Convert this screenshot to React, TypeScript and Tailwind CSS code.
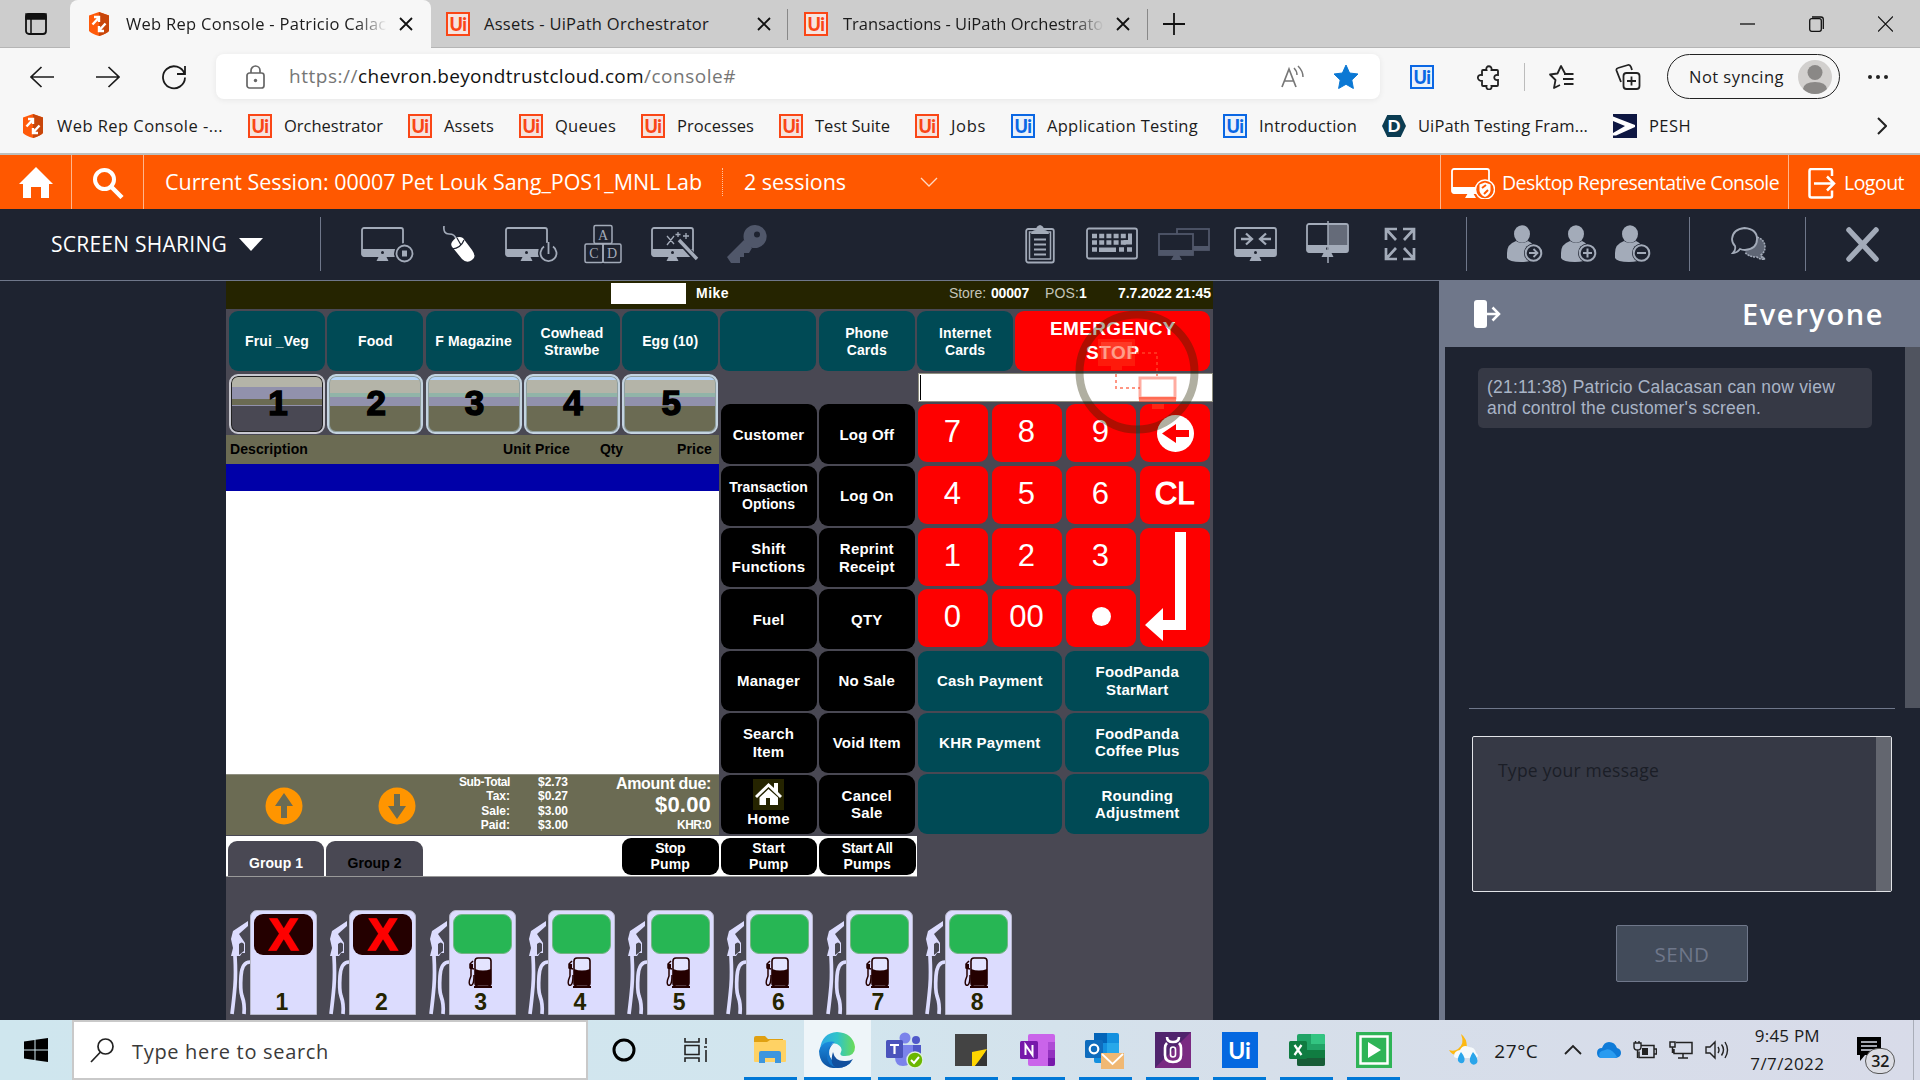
import { useLayoutEffect, useRef, useState } from "react";
import type { ReactNode } from "react";

/* One-line label whose letter spacing is adjusted to fill a given width. */
function Fit({ w, children, className = "" }: { w: number; children: string; className?: string }) {
  const ref = useRef<HTMLSpanElement>(null);
  const [ls, setLs] = useState(0);
  useLayoutEffect(() => {
    if (ref.current) {
      const natural = ref.current.getBoundingClientRect().width;
      setLs((w - natural) / children.length);
    }
  }, [w, children]);
  return (
    <span ref={ref} className={"inline-block shrink-0 whitespace-pre " + className} style={{ letterSpacing: ls }}>
      {children}
    </span>
  );
}

function Svg({ w, h, className = "", children }: { w: number; h: number; className?: string; children: ReactNode }) {
  return (
    <svg width={w} height={h} viewBox={`0 0 ${w} ${h}`} fill="none" className={"shrink-0 " + className}>
      {children}
    </svg>
  );
}

function Shield() {
  return (
    <Svg w={24} h={24}>
      <path d="M12 0 22 3.500V19q-3 3-10 5Q5 22 2 19V3.500Z" fill="#ff5a0a" />
      <path d="M12 0 22 3.500V19q-3 3-10 5Z" fill="#c8460a" />
      <path d="M5.500 12.500 11 6.500M7 5h5v5M18.500 11.500l-5.500 6M17 19h-5v-5" stroke="#fff" strokeWidth="2.400" />
    </Svg>
  );
}

function UiIcon({ blue = false }: { blue?: boolean }) {
  return (
    <span
      className={
        "flex h-6 w-6 shrink-0 items-center justify-center border-2 font-['Lato'] text-[18px] font-black leading-none tracking-[-0.5px] " +
        (blue ? "border-[#0a67e4] bg-[#e9f1fb] text-[#0a67e4]" : "border-[#fa4616] bg-[#f6e4df] text-[#fa4616]")
      }
    >
      Ui
    </span>
  );
}

function CloseX() {
  return (
    <Svg w={14} h={16}>
      <path d="M1 2 13 14M13 2 1 14" stroke="#111" strokeWidth="1.800" />
    </Svg>
  );
}

function TabStrip() {
  return (
    <div className="flex h-12 items-stretch border-b border-[#b5b5b5] bg-[#cdcdcd] text-[16.5px] text-[#1b1b1b]">
      <div className="flex w-[70px] items-center pl-[25px]">
        <Svg w={22} h={24}>
          <rect x="1" y="2" width="20" height="20" rx="3" stroke="#111" strokeWidth="1.800" />
          <path d="M1 2h20v5H1zM6 7v15" fill="#111" stroke="#111" strokeWidth="1.500" />
        </Svg>
      </div>
      <div className="-mb-px flex w-[361px] items-center rounded-t-lg bg-[#f7f7f7] pl-[17px]">
        <Shield />
        <div className="ml-[15px] w-[261px] overflow-hidden pt-px [mask-image:linear-gradient(to_right,#000_88%,transparent)]">
          <Fit w={270}>Web Rep Console - Patricio Calaca</Fit>
        </div>
        <span className="ml-[12px]"><CloseX /></span>
      </div>
      <div className="flex w-[357px] items-center border-r border-[#888] pl-[15px] [border-image:linear-gradient(to_bottom,transparent_20%,#888_20%,#888_84%,transparent_84%)_1]">
        <UiIcon />
        <Fit w={225} className="ml-[14px] pt-px">Assets - UiPath Orchestrator</Fit>
        <span className="ml-[48px]"><CloseX /></span>
      </div>
      <div className="flex w-[360px] items-center border-r border-[#888] pl-4 [border-image:linear-gradient(to_bottom,transparent_20%,#888_20%,#888_84%,transparent_84%)_1]">
        <UiIcon />
        <div className="ml-[15px] w-[261px] overflow-hidden pt-px [mask-image:linear-gradient(to_right,#000_88%,transparent)]">
          <Fit w={267}>Transactions - UiPath Orchestrator</Fit>
        </div>
        <span className="ml-[12px]"><CloseX /></span>
      </div>
      <div className="flex items-center pl-[15px]">
        <Svg w={22} h={22}>
          <path d="M0 11h22M11 0v22" stroke="#111" strokeWidth="1.800" />
        </Svg>
      </div>
      <div className="ml-auto flex items-center gap-[54px] pr-[27px]">
        <Svg w={15} h={16}><path d="M0 8h15" stroke="#111" strokeWidth="1.300" /></Svg>
        <Svg w={15} h={16}>
          <rect x=".7" y="2.700" width="11.600" height="12.600" rx="2" stroke="#111" strokeWidth="1.300" />
          <path d="M3 1h9q2.300 0 2.300 2.300V13" stroke="#111" strokeWidth="1.300" />
        </Svg>
        <Svg w={15} h={16}><path d="M0 .5 15 15.500M15 .5 0 15.500" stroke="#111" strokeWidth="1.200" /></Svg>
      </div>
    </div>
  );
}

function AddressBar() {
  return (
    <div className="flex h-[57px] items-center text-[#1b1b1b]">
      <Svg w={24} h={24} className="ml-[30px]"><path d="M24 12H1M11.500 2 1 12l10.500 10" stroke="#1b1b1b" strokeWidth="1.700" /></Svg>
      <Svg w={24} h={24} className="ml-[42px]"><path d="M0 12h23M12.500 2 23 12 12.500 22" stroke="#1b1b1b" strokeWidth="1.700" /></Svg>
      <Svg w={24} h={26} className="ml-[42px]">
        <path d="M22.500 10A11 11 0 1 0 23 13.500M23 2v8h-8" stroke="#1b1b1b" strokeWidth="1.800" />
      </Svg>
      <div className="ml-[30px] flex h-[45px] w-[1164px] items-center rounded-lg bg-white pl-[30px] shadow-[0_1px_6px_rgba(0,0,0,0.07)]">
        <Svg w={19} h={24}>
          <rect x="1" y="8" width="17" height="15" rx="2.500" stroke="#666" strokeWidth="1.700" />
          <path d="M5 8V5.500a4.500 4.500 0 0 1 9 0V8" stroke="#666" strokeWidth="1.700" />
          <circle cx="9.500" cy="15.500" r="1.700" fill="#666" />
        </Svg>
        <Fit w={69} className="ml-[24px] text-[19px] text-[#767676]">https://</Fit>
        <Fit w={286} className="text-[19px] text-[#111]">chevron.beyondtrustcloud.com</Fit>
        <Fit w={92} className="text-[19px] text-[#767676]">/console#</Fit>
        <Svg w={24} h={24} className="ml-[545px]">
          <path d="M1 22 8 4l7 18M3.500 16h9" stroke="#777" strokeWidth="1.700" />
          <path d="M13 3q3 3 3 7M17 1q5 5 5 11" stroke="#777" strokeWidth="1.500" />
        </Svg>
        <Svg w={26} h={25} className="ml-[28px]">
          <path d="m13 1 3.600 8 8.400 1-6.200 6 1.600 8.500L13 20.300 5.600 24.500 7.200 16 1 10l8.400-1Z" fill="#0b78d4" stroke="#0b78d4" strokeLinejoin="round" />
        </Svg>
      </div>
      <div className="ml-[30px]"><UiIcon blue /></div>
      <Svg w={24} h={26} className="ml-[43px]">
        <path d="M6 6h3.500C8 1 15.500 1 14.500 6H20q1 0 1 1v4c-5-1-5 6 0 5v5q0 1-1 1h-5.500c1 4.500-6 4.500-5 0H6q-1 0-1-1v-4C-.5 17-.5 10 5 11V7q0-1 1-1Z" stroke="#222" strokeWidth="1.800" />
      </Svg>
      <div className="ml-[23px] h-7 w-px bg-[#bcbcbc]" />
      <Svg w={25} h={26} className="ml-[24px]">
        <path d="M16 9.500 12 2 8.500 9.500 1 10.500l5.500 5.500L5 24l6-3" stroke="#222" strokeWidth="1.800" strokeLinejoin="round" />
        <path d="M15 10h9.500M14 15h10.500M15 20h9.500" stroke="#222" strokeWidth="1.800" />
      </Svg>
      <Svg w={26} h={26} className="ml-[41px]">
        <rect x="8.500" y="9" width="16" height="16" rx="3" stroke="#222" strokeWidth="1.800" />
        <path d="M16.500 12.500v9M12 17h9M6 18 1.500 6.500Q1 4.500 3 4L13 1q2-.5 3 2l1 3" stroke="#222" strokeWidth="1.800" />
      </Svg>
      <div className="ml-[26px] flex h-[45px] w-[173px] items-center rounded-full border-[1.5px] border-[#222] pl-[21px]">
        <Fit w={95} className="pt-px text-[16.5px]">Not syncing</Fit>
        <Svg w={34} h={34} className="ml-[14px]">
          <circle cx="17" cy="17" r="17" fill="#d2d0ce" />
          <circle cx="17" cy="12.500" r="7.500" fill="#8a8886" />
          <path d="M5 29q1-7 12-7t12 7q-5 5-12 5T5 29Z" fill="#8a8886" />
        </Svg>
      </div>
      <Svg w={22} h={6} className="ml-[27px]">
        <circle cx="3" cy="3" r="2" fill="#222" /><circle cx="11" cy="3" r="2" fill="#222" /><circle cx="19" cy="3" r="2" fill="#222" />
      </Svg>
    </div>
  );
}

const bookmarks: { icon: ReactNode; label: string; w: number }[] = [
  { icon: <Shield />, label: "Web Rep Console -...", w: 166 },
  { icon: <UiIcon />, label: "Orchestrator", w: 99 },
  { icon: <UiIcon />, label: "Assets", w: 50 },
  { icon: <UiIcon />, label: "Queues", w: 61 },
  { icon: <UiIcon />, label: "Processes", w: 77 },
  { icon: <UiIcon />, label: "Test Suite", w: 75 },
  { icon: <UiIcon />, label: "Jobs", w: 35 },
  { icon: <UiIcon blue />, label: "Application Testing", w: 151 },
  { icon: <UiIcon blue />, label: "Introduction", w: 98 },
  {
    icon: (
      <span className="flex h-[22px] w-6 items-center justify-center bg-[#0b3c52] font-['Lato'] text-[17px] font-black text-white [clip-path:polygon(22%_0,78%_0,100%_50%,78%_100%,22%_100%,0_50%)]">D</span>
    ),
    label: "UiPath Testing Fram...",
    w: 170,
  },
  {
    icon: (
      <Svg w={24} h={24}>
        <path d="M0 0h24v24H0z" fill="#0e1742" />
        <path d="M0 2.500 22 11v2L3 21.500H0V19l12-7L0 7Z" fill="#fff" />
      </Svg>
    ),
    label: "PESH",
    w: 42,
  },
];

function Bookmarks() {
  return (
    <div className="flex h-[48px] items-center gap-[25px] pb-[6px] pl-[21px] text-[16.5px] text-[#1b1b1b]">
      {bookmarks.map((b) => (
        <div key={b.label} className="flex shrink-0 items-center gap-3">
          {b.icon}
          <Fit w={b.w}>{b.label}</Fit>
        </div>
      ))}
      <Svg w={10} h={18} className="ml-auto mr-[33px]"><path d="M1 1l8 8-8 8" stroke="#222" strokeWidth="2" /></Svg>
    </div>
  );
}

function SessionBar() {
  return (
    <div className="flex h-[54px] items-stretch bg-[#ff5800] font-['Open_Sans'] text-white">
      <div className="flex w-[72px] items-center justify-center border-r border-[#ffb58c]">
        <Svg w={36} h={31}>
          <path d="M18 0 1 17h4v14h8V20h10v11h8V17h4Z" fill="#fff" />
        </Svg>
      </div>
      <div className="flex w-[72px] items-center border-r border-[#ffb58c] pl-[21px] pt-[3px]">
        <Svg w={31} h={31}>
          <circle cx="11.500" cy="11.500" r="9.500" stroke="#fff" strokeWidth="4" />
          <path d="M18 18.500 29 29.500" stroke="#fff" strokeWidth="4.500" />
        </Svg>
      </div>
      <div className="flex items-center pl-[21px]">
        <Fit w={537} className="pt-px text-[21.5px]">Current Session: 00007 Pet Louk Sang_POS1_MNL Lab</Fit>
        <div className="ml-[20px] h-[28px] border-l border-dotted border-[#ffc4a0]" />
        <Fit w={102} className="ml-[21px] pt-px text-[21.5px]">2 sessions</Fit>
        <Svg w={18} h={12} className="ml-[74px]"><path d="m1 2 8 8 8-8" stroke="#ffd9c4" strokeWidth="1.300" /></Svg>
      </div>
      <div className="ml-auto flex w-[348px] items-center border-l border-[#ffb58c] pl-[10px] pt-[3px]">
        <Svg w={44} h={31}>
          <rect x="1" y="1" width="37" height="24" rx="2" stroke="#fff" strokeWidth="1.800" />
          <path d="M1 19h27v6H1zM17 25l-3 5h11l-3-5Z" fill="#fff" />
          <circle cx="34" cy="21.500" r="9.500" fill="#ff5800" stroke="#fff" strokeWidth="1.500" />
          <path d="m34 14.500 5.500 2V23q-1 4-5.500 6-4.500-2-5.500-6v-6.500Z" fill="#fff" />
          <path d="m31 20 4-3M33 26l4-4" stroke="#ff5800" strokeWidth="2" />
        </Svg>
        <Fit w={277} className="ml-[7px] pb-px text-[19.5px]">Desktop Representative Console</Fit>
      </div>
      <div className="flex w-[132px] items-center border-l border-[#ffb58c] pl-[19px] pt-[3px]">
        <Svg w={28} h={31}>
          <path d="M24 8V2.500q0-1.500-1.500-1.500H3.500Q1.500 1 1.500 3v24.500q0 2 2 2h19q1.500 0 1.500-1.500v-5.500" stroke="#fff" strokeWidth="2.500" />
          <path d="M6 15.500h20M19 8.500l7 7-7 7" stroke="#fff" strokeWidth="2.500" />
        </Svg>
        <Fit w={60} className="ml-[8px] pb-px text-[19.5px]">Logout</Fit>
      </div>
    </div>
  );
}

const G = "#a3abb9";

function Monitor({ children }: { children?: ReactNode }) {
  return (
    <>
      <rect x="1" y="3" width="41" height="28" rx="2" stroke={G} strokeWidth="1.800" />
      <path d="M1 24h41v7H1zM18 31l-2.500 5h12L25 31Z" fill={G} />
      <circle cx="21.500" cy="27.500" r="1.500" fill="#1e2330" />
      {children}
    </>
  );
}

function Person({ children }: { children: ReactNode }) {
  return (
    <Svg w={36} h={38}>
      <ellipse cx="15" cy="9" rx="8" ry="8.800" fill={G} />
      <path d="M9 16Q0 19 0 28v5q2 4 14 4 10 0 14-4V26q-1-8-7-10-6 4-12 0Z" fill={G} />
      <circle cx="26.500" cy="28" r="9.500" fill="#1e2330" />
      <circle cx="26.500" cy="28" r="7.800" stroke={G} strokeWidth="2" />
      {children}
    </Svg>
  );
}

function Divider({ className = "" }: { className?: string }) {
  return <div className={"h-[54px] w-px shrink-0 bg-[#6f778a] " + className} />;
}

function ToolBar() {
  return (
    <div className="flex h-[72px] items-center border-b border-[#6f778a] bg-[#1e2330] pb-px font-['Open_Sans'] text-white">
      <Fit w={176} className="ml-[51px] pt-px text-[21px]">SCREEN SHARING</Fit>
      <Svg w={24} h={13} className="ml-[12px] mt-px"><path d="M0 0h24L12 13Z" fill="#fff" /></Svg>
      <Divider className="ml-[57px]" />
      <Svg w={54} h={38} className="ml-[40px]">
        <Monitor>
          <circle cx="43.500" cy="28.500" r="10.500" fill="#1e2330" /><circle cx="43.500" cy="28.500" r="8" stroke={G} strokeWidth="1.800" />
          <path d="M41 25.500h5v6h-5z" fill={G} />
        </Monitor>
      </Svg>
      <Svg w={34} h={40} className="ml-[28px]">
        <path d="M1 2q-1 8 5 8t7 5" stroke={G} strokeWidth="1.700" />
        <path d="M9 18q5-7 11-4l9 12q5 7 0 10-5 4-10-1l-9-11q-3-3-1-6Z" fill="#fff" />
        <path d="M9 25q9-1 12-9M14 14l4 7" stroke="#1e2330" strokeWidth="1.200" />
      </Svg>
      <Svg w={54} h={38} className="ml-[28px]">
        <Monitor>
          <circle cx="43.500" cy="28" r="10.500" fill="#1e2330" />
          <path d="M39 21.500a8 8 0 1 0 9 0M43.500 17v12" stroke={G} strokeWidth="1.800" />
        </Monitor>
      </Svg>
      <Svg w={38} h={40} className="ml-[25px]">
        <rect x="10" y="1.500" width="18" height="18" rx="1.500" stroke={G} strokeWidth="1.500" />
        <rect x="1" y="20" width="18" height="18.500" rx="1.500" stroke={G} strokeWidth="1.500" />
        <rect x="19" y="20" width="18" height="18.500" rx="1.500" stroke={G} strokeWidth="1.500" />
        <g fill={G} fontFamily="Liberation Serif" fontSize="14" textAnchor="middle">
          <text x="19" y="15.500">A</text><text x="10" y="34">C</text><text x="28" y="34">D</text>
        </g>
      </Svg>
      <Svg w={48} h={38} className="ml-[29px]">
        <Monitor>
          <path d="m27 14 19 21" stroke="#1e2330" strokeWidth="6" />
          <path d="m28 15 18 19" stroke={G} strokeWidth="3.500" />
          <path d="m16 11 7 8M23 11l-7 9M27 7v5M24.500 9.500h5M35 8v6M32 11h6" stroke={G} strokeWidth="1.300" />
        </Monitor>
      </Svg>
      <Svg w={40} h={40} className="ml-[28px]">
        <path d="M28 1a11.500 11.500 0 1 0 0 23q2 0 3.500-.5A11.500 11.500 0 0 0 28 1Zm2 6.500a3 3 0 1 1 0 6 3 3 0 0 1 0-6Z" fill="#50576a" fillRule="evenodd" />
        <path d="m17 16 8 8-3 5h-5v4h-4v6H4l-4-6Z" fill="#50576a" />
      </Svg>
      <Svg w={30} h={40} className="ml-[258px]">
        <rect x="1.200" y="5" width="27.600" height="33.500" rx="2" stroke={G} strokeWidth="1.800" />
        <rect x="4.500" y="8" width="21" height="27" stroke={G} strokeWidth="1.500" />
        <path d="M6 10q1-4 5-4 0-4 4-5 4 1 4 5 4 0 5 4Z" fill={G} />
        <path d="M9 15.500h12M9 20.500h12M9 25.500h12M9 30.500h12" stroke={G} strokeWidth="1.800" />
      </Svg>
      <Svg w={52} h={34} className="ml-[31px]">
        <rect x="1" y="1.500" width="50" height="30" rx="2" stroke={G} strokeWidth="1.800" />
        <path d="M6 9h35M6 15.500h35" stroke={G} strokeWidth="4.500" strokeDasharray="5 2.200" />
        <path d="M6 22.500h5M33 22.500h5M41 22.500h5" stroke={G} strokeWidth="4.500" />
        <path d="M13 20.500h17v4.500H13zM42 6.500h4v11h-8.500v-4.500H42z" fill={G} />
      </Svg>
      <Svg w={52} h={36} className="ml-[20px]">
        <rect x="19" y="3" width="32" height="21" stroke="#50576a" strokeWidth="1.800" />
        <path d="M35 20h16v4H35z" fill="#50576a" />
        <rect x="1" y="8" width="34" height="21" fill="#1e2330" stroke="#50576a" strokeWidth="1.800" />
        <path d="M1 24h34v5H1zM16 29l-3 5h11l-3-5Z" fill="#50576a" />
      </Svg>
      <Svg w={44} h={38} className="ml-[24px]">
        <Monitor><path d="M7 14h10M12 8.500l6 5.500-6 5.500M37 14H27M32 8.500 26 14l6 5.500" stroke={G} strokeWidth="2.300" /></Monitor>
      </Svg>
      <Svg w={46} h={42} className="mb-[4px] ml-[28px]">
        <Monitor><path d="M22 4h19v20H22z" fill="#656b79" /><path d="M22 0v42" stroke={G} strokeWidth="1.500" /></Monitor>
      </Svg>
      <Svg w={32} h={34} className="ml-[32px]">
        <path d="M2 13V2h11M2 2l10 11M19 2h11v11M30 2 20 13M2 21v11h11M2 32l10-11M19 32h11V21M30 32 20 21" stroke={G} strokeWidth="2.700" />
      </Svg>
      <Divider className="ml-[50px]" />
      <div className="ml-[40px] flex gap-[18px]">
        <Person><path d="M22 28h8M26.500 24l4 4-4 4" stroke={G} strokeWidth="1.800" /></Person>
        <Person><path d="M22 28h9M26.500 23.500v9" stroke={G} strokeWidth="2" /></Person>
        <Person><path d="M22 28h9" stroke={G} strokeWidth="2" /></Person>
      </div>
      <Divider className="ml-[38px]" />
      <Svg w={36} h={34} className="ml-[41px]">
        <path d="M20 22q10 2 10 6 4 2 4 4-5 1-8-2-8 0-11-4Z" fill="#8a92a1" />
        <path d="M26 10q8 3 8 10 0 5-4 8 0 3 4 4-5 1-8-2-9 0-12-5" stroke={G} strokeWidth="1.600" strokeDasharray="2 1" fill="#5f6675" />
        <path d="M13.500 1Q26 2 26 12T14 23q-3 0-5-1-3 4-7 4 3-3 2-7-3-3-3-7Q2 2 13.500 1Z" fill="#1e2330" stroke={G} strokeWidth="1.800" />
      </Svg>
      <Divider className="ml-[38px]" />
      <Svg w={33} h={35} className="ml-[40px]"><path d="M3 3l27 29M30 3 3 32" stroke={G} strokeWidth="5.500" strokeLinecap="round" /></Svg>
    </div>
  );
}

function TealKey({ lines, className = "" }: { lines: string[]; className?: string }) {
  return (
    <div className={"flex flex-col items-center justify-center rounded-[9px] bg-[#004a55] text-center font-bold text-white " + className}>
      {lines.map((l) => <span key={l}>{l}</span>)}
    </div>
  );
}

const categories = [["Frui _Veg"], ["Food"], ["F Magazine"], ["Cowhead", "Strawbe"], ["Egg (10)"], [], ["Phone", "Cards"], ["Internet", "Cards"]];

const functions = [
  ["Customer"], ["Log Off"], ["Transaction", "Options"], ["Log On"], ["Shift", "Functions"], ["Reprint", "Receipt"],
  ["Fuel"], ["QTY"], ["Manager"], ["No Sale"], ["Search", "Item"], ["Void Item"], ["Home"], ["Cancel", "Sale"],
];

const payments = [["Cash Payment"], ["FoodPanda", "StarMart"], ["KHR Payment"], ["FoodPanda", "Coffee Plus"], [], ["Rounding", "Adjustment"]];

function FunctionKey({ lines }: { lines: string[] }) {
  const home = lines[0] === "Home";
  const size = lines[0] === "Transaction" ? "text-[14px] leading-[16.5px] tracking-[0px]" : "text-[15px] leading-[17.3px] tracking-[0.2px]";
  return (
    <div className={"flex h-[59.7px] flex-col items-center justify-center rounded-[9px] bg-black font-bold text-white " + size}>
      {home && (
        <Svg w={31} h={31} className="-mt-[3px] bg-[#252400]">
          <path d="M15.500 4 2 17l2 2 11.500-11L27 19l2-2-4-4V4h-4v5Z" fill="#fff" />
          <path d="m15.500 10-9 8.500V26H13v-7h4v7h8v-7.500Z" fill="#fff" />
        </Svg>
      )}
      {lines.map((l) => <span key={l}>{l}</span>)}
    </div>
  );
}

function NumKey({ children, className = "" }: { children: ReactNode; className?: string }) {
  return <div className={"flex items-center justify-center rounded-[9px] bg-[#fe0000] text-[31px] leading-none text-white " + className}>{children}</div>;
}

function ArrowDisc({ down = false }: { down?: boolean }) {
  return (
    <Svg w={38} h={38} className={down ? "rotate-180" : ""}>
      <circle cx="19" cy="19" r="18.500" fill="#ff9500" />
      <path d="M19 6 28 19h-6v12h-6V19h-6Z" fill="#6b6b53" />
    </Svg>
  );
}

function Pump({ n }: { n: number }) {
  const stopped = n < 3;
  return (
    <div className="flex h-[105px] w-[88px]">
      <Svg w={21} h={105}>
        <path d="m4 21 15-10v5L10 24l6 9v10h-3l-2 3H2l2-8-2-9Z" fill="#dcdcfe" />
        <path d="M10 34q3-3 5 0v7l-5 4Z" fill="#494853" />
        <path d="M6 46q1 18 0 30T3 104M21 52q-8 0-9 14t1 20q3 8 2 18" stroke="#dcdcfe" strokeWidth="3.700" />
      </Svg>
      <div className="flex h-[105px] w-[67px] flex-col items-center rounded-t-[7px] border border-[#b7b7c9] bg-[#dcdcfe] pt-[3px]">
        {stopped ? (
          <div className="flex h-[41px] w-[59px] items-center justify-center rounded-[9px] bg-[#240000] text-[44px] font-bold leading-none text-[#fe0000] [-webkit-text-stroke:1.5px_#fe0000]">X</div>
        ) : (
          <div className="h-[41px] w-[59px] rounded-[9px] border border-[#75b586] bg-[#27b654]" />
        )}
        <div className="mt-[3px] h-[34px] pr-[5px]">
          {!stopped && (
            <Svg w={24} h={32}>
              <rect x="7" y="1" width="16" height="28" rx="3" fill="#e4e4fe" stroke="#240000" strokeWidth="1.600" />
              <path d="M7 12q8 3 16 0v16H7zM6 29h18v2H6z" fill="#240000" />
              <path d="M5 4 2 7v4l4 1M3 12v7q-3 7-1 9 4 2 4-10" stroke="#240000" strokeWidth="1.500" />
              <path d="M2 7h3v5H2z" fill="#240000" />
            </Svg>
          )}
        </div>
        <div className="pr-[3px] text-[23px] font-bold leading-[24px] text-[#252400]">{n}</div>
      </div>
    </div>
  );
}

function Pos() {
  return (
    <div className="relative flex w-[987px] flex-col bg-[#494853] font-['Liberation_Sans']">
      <div className="flex h-[28px] shrink-0 items-center bg-[#252400] pb-[3px] text-[14px] text-[#c4c4b8]">
        <div className="ml-[385px] h-[21px] w-[75px] bg-white" />
        <Fit w={33} className="ml-[10px] font-bold text-white">Mike</Fit>
        <Fit w={37} className="ml-[220px]">Store:</Fit>
        <Fit w={38} className="ml-[5px] font-bold text-white">00007</Fit>
        <Fit w={34} className="ml-[16px]">POS:</Fit>
        <Fit w={8} className="font-bold text-white">1</Fit>
        <Fit w={93} className="ml-[31px] font-bold text-white">7.7.2022 21:45</Fit>
      </div>
      <div className="flex gap-[2.3px] pl-[3px] pt-[2px] text-[14px] leading-[16.4px] tracking-[0.1px]">
        {categories.map((c, i) => <TealKey key={i} lines={c} className="h-[60px] w-24 pt-px" />)}
        <div className="flex h-[60px] w-[195px] flex-col items-center rounded-[9px] bg-[#fe0000] pt-[6px] text-[19px] font-bold leading-[24px] text-white">
          <Fit w={126}>EMERGENCY</Fit>
          <Fit w={54}>STOP</Fit>
        </div>
      </div>
      <div className="flex h-[465px]">
        <div className="flex w-[493px] flex-col">
          <div className="flex gap-[2.3px] pb-px pl-[3px] pt-[3px]">
            <div className="flex h-[60px] w-24 items-center justify-center rounded-[9px] border-2 border-[#c8c8d0] bg-[linear-gradient(#b4b4a8_0_20%,#9191ac_20%_41%,#6b6b53_41%_51%,#9191ac_51%_53%,#494853_53%)] pb-px pl-[2px] text-[35px] font-bold text-black shadow-[inset_0_0_0_1px_#222] [-webkit-text-stroke:1.5px_#000]">1</div>
            {[2, 3, 4, 5].map((n) => (
              <div key={n} className="flex h-[60px] w-24 items-center justify-center rounded-[9px] border-2 border-[#c3d3e0] bg-[linear-gradient(#b4d4fa_0_7%,#b4b4a8_7%_31%,#91b4a8_31%_38%,#9191ac_38%_53%,#6b6b53_53%)] pb-px pl-[2px] text-[35px] font-bold text-black shadow-[inset_0_0_0_1px_#8f9f9f] [-webkit-text-stroke:1.5px_#000]">{n}</div>
            ))}
          </div>
          <div className="flex h-[29px] items-center bg-[#6b6b53] pl-[4px] text-[14px] font-bold text-black">
            <Fit w={78}>Description</Fit>
            <Fit w={67} className="ml-[195px]">Unit Price</Fit>
            <Fit w={23} className="ml-[30px]">Qty</Fit>
            <Fit w={35} className="ml-[54px]">Price</Fit>
          </div>
          <div className="h-[27px] bg-[#0000a8]" />
          <div className="h-[284px] border-b border-[#8f8f80] bg-white" />
          <div className="flex h-[60px] bg-[#6b6b53] text-white">
            <div className="flex items-center gap-[75px] pl-[39px] pt-px"><ArrowDisc /><ArrowDisc down /></div>
            <div className="ml-auto flex flex-col items-end text-[12px] font-bold leading-[14.4px]">
              <Fit w={51}>Sub-Total</Fit><span>Tax:</span><span>Sale:</span><span>Paid:</span>
            </div>
            <div className="ml-[28px] flex flex-col text-[12px] font-bold leading-[14.4px]">
              <Fit w={30}>$2.73</Fit><Fit w={30}>$0.27</Fit><Fit w={30}>$3.00</Fit><Fit w={30}>$3.00</Fit>
            </div>
            <div className="-mt-px flex w-[151px] flex-col items-end pr-[8px] font-bold">
              <Fit w={95} className="text-[16px] font-bold leading-[19px]">Amount due:</Fit>
              <Fit w={56} className="text-[22px] leading-[24px]">$0.00</Fit>
              <Fit w={34} className="text-[12px] leading-[16px]">KHR:0</Fit>
            </div>
          </div>
        </div>
        <div className="ml-[1.5px] mt-[33.4px] grid w-[194.300px] shrink-0 grid-cols-2 content-start gap-x-[2.300px] gap-y-[2px]">
          {functions.map((f) => <FunctionKey key={f[0]} lines={f} />)}
        </div>
        <div className="ml-[3px] flex flex-col pt-[2px]">
          <div className="h-[29px] w-[295px] border border-[#8f8f80] bg-white p-px"><div className="h-[25px] w-px bg-black" /></div>
          <div className="mt-[2.400px] grid grid-cols-[70px_70px_70px_70px] grid-rows-[58px_58px_58px_58px] gap-x-[4.100px] gap-y-[3.700px]">
            <NumKey className="pb-[3px] pr-px">7</NumKey><NumKey className="pb-[3px] pr-px">8</NumKey><NumKey className="pb-[3px] pr-px">9</NumKey>
            <NumKey>
              <Svg w={37} h={37}><circle cx="18.500" cy="18.500" r="18.500" fill="#fff" /><path d="M5 18.500 19 9v6h13v7H19v6Z" fill="#fe0000" /></Svg>
            </NumKey>
            <NumKey className="pb-[3px] pr-px">4</NumKey><NumKey className="pb-[3px] pr-px">5</NumKey><NumKey className="pb-[3px] pr-px">6</NumKey>
            <NumKey className="pb-[3px] pr-px [-webkit-text-stroke:1.2px_#fff]">CL</NumKey>
            <NumKey className="pb-[3px] pr-px">1</NumKey><NumKey className="pb-[3px] pr-px">2</NumKey><NumKey className="pb-[3px] pr-px">3</NumKey>
            <NumKey className="row-span-2">
              <Svg w={70} h={119}><path d="M35 4h11v98H23v11L5 97l18-17v12h12Z" fill="#fff" /></Svg>
            </NumKey>
            <NumKey className="pb-[3px] pr-px">0</NumKey><NumKey className="pb-[3px] pr-px">00</NumKey>
            <NumKey className="pb-[3px] pl-px"><div className="h-[19px] w-[19px] rounded-full bg-white" /></NumKey>
          </div>
          <div className="mt-[3.400px] grid grid-cols-[144px_144px] gap-x-[3.500px] gap-y-[2px] text-[15px] leading-[17.300px] tracking-[0.200px]">
            {payments.map((p, i) => <TealKey key={i} lines={p} className="h-[59.700px]" />)}
          </div>
        </div>
      </div>
      <div className="flex h-[41px] w-[691px] items-end border-b border-[#999] bg-white pl-[2px]">
        <div className="flex h-[35px] w-[96px] items-center justify-center rounded-t-[9px] bg-[#494853] pt-[9px] text-[14px] font-bold text-white"><Fit w={54}>Group 1</Fit></div>
        <div className="ml-[2px] flex h-[35px] w-[97px] items-center justify-center rounded-t-[9px] bg-[#494853] pt-[9px] text-[14px] font-bold text-black"><Fit w={54}>Group 2</Fit></div>
        <div className="mb-px ml-auto flex gap-[2px] pr-[1.500px] text-center text-[14px] font-bold leading-[16.400px] tracking-[0.200px] text-white">
          {[["Stop", "Pump"], ["Start", "Pump"], ["Start All", "Pumps"]].map((b) => (
            <div key={b[0]} className="flex h-[37px] w-[96.500px] flex-col items-center justify-center rounded-[9px] bg-black pb-px"><Fit w={b[0] === "Start All" ? 51 : b[0] === "Stop" ? 30 : 33}>{b[0]}</Fit><span>{b[1]}</span></div>
          ))}
        </div>
      </div>
      <div className="flex gap-[11.300px] pl-[3px] pt-[33px]">
        {[1, 2, 3, 4, 5, 6, 7, 8].map((n) => <Pump key={n} n={n} />)}
      </div>
      <Svg w={124} h={124} className="absolute left-[849px] top-[29px]">
        <circle cx="62" cy="62" r="57.500" stroke="#282600" strokeOpacity=".37" strokeWidth="8" />
        <path d="M23 29h37v27H47v4H36v-4H23Z" fill="#ff4a20" opacity=".35" />
        <path d="M26 32h31v17H26z" fill="#ff6a50" opacity=".4" />
        <path d="M61 43h21v23M41 64v14h24" stroke="#ff5030" strokeOpacity=".6" strokeWidth="2" strokeDasharray="3 3" />
        <rect x="65" y="68" width="35" height="20" stroke="#ff3a20" strokeOpacity=".42" strokeWidth="3" />
        <path d="M64 87h37v5H64zM77 94h12v5H77z" fill="#ff4020" opacity=".6" />
      </Svg>
    </div>
  );
}

function Chat() {
  return (
    <div className="flex w-[481px] flex-col border-l-[6px] border-[#6f778a] bg-[#1e2330] font-['Open_Sans']">
      <div className="flex h-[66px] items-center justify-between bg-[#6f778a] pl-[29px] pr-[36px]">
        <Svg w={27} h={28}>
          <rect x="0" y="0" width="13" height="28" rx="3" fill="#fff" />
          <path d="M12 14h13M18.500 7.500l6.500 6.500-6.500 6.500" stroke="#fff" strokeWidth="2.500" />
        </Svg>
        <Fit w={142} className="text-[29px] font-semibold text-white">Everyone</Fit>
      </div>
      <div className="flex h-[361px] justify-between">
        <div className="ml-[33px] mt-[21px] flex h-[60px] w-[394px] flex-col rounded-[5px] bg-[#363945] pl-[9px] pt-[9px] font-['Liberation_Sans'] text-[17.500px] leading-[21px] text-[#a9b4c6]">
          <Fit w={348} className="self-start">(21:11:38) Patricio Calacasan can now view</Fit>
          <Fit w={274} className="self-start">and control the customer's screen.</Fit>
        </div>
        <div className="w-[15px] bg-[#50545f]" />
      </div>
      <div className="ml-[24px] h-px w-[426px] bg-[#6f778a]" />
      <div className="ml-[27px] mt-[27px] flex h-[156px] w-[420px] justify-between rounded-[2px] border border-[#e2e4e8] bg-[#363945]">
        <Fit w={161} className="ml-[25px] mt-[20px] self-start text-[17.500px] text-[#1b1e27]">Type your message</Fit>
        <div className="w-[15px] bg-[#63666f]" />
      </div>
      <div className="ml-[171px] mt-[33px] flex h-[57px] w-[132px] items-center justify-center rounded-[2px] border border-[#6f778a] bg-[#424b5a] pt-px text-[20.500px] text-[#6f778a]">
        <Fit w={55}>SEND</Fit>
      </div>
    </div>
  );
}

function TaskApp({ children }: { children: ReactNode }) {
  return (
    <div className="flex h-[60px] w-[67.1px] flex-col items-center">
      <div className="flex h-[57px] items-center pt-[3px]">{children}</div>
      <div className="h-[3px] w-[53px] bg-[#0078d7]" />
    </div>
  );
}

function TaskBar() {
  return (
    <div className="flex h-[60px] items-center bg-[linear-gradient(90deg,#cfe6ee_0%,#d2e5ee_45%,#d6dfea_65%,#d8dbe9_100%)] font-['Open_Sans'] text-[#1b1b1b]">
      <div className="flex w-[72px] justify-center">
        <Svg w={24} h={24}><path d="M0 3.500 10.500 2v9.500H0zM11.500 1.800 24 0v11.500H11.500zM0 12.500h10.500V22L0 20.500zM11.500 12.500H24V24l-12.500-1.800z" fill="#000" /></Svg>
      </div>
      <div className="flex h-[60px] w-[516px] items-center border-2 border-[#c9c9c9] bg-white pl-[16px]">
        <Svg w={24} h={25}><circle cx="15.500" cy="8.500" r="7.500" stroke="#222" strokeWidth="1.700" /><path d="M10.500 14 1 24" stroke="#222" strokeWidth="1.700" /></Svg>
        <Fit w={197} className="ml-[18px] pt-[3px] text-[20px] text-[#3a3a3a]">Type here to search</Fit>
      </div>
      <Svg w={24} h={26} className="ml-[24px]"><circle cx="12" cy="13" r="10" stroke="#000" strokeWidth="3" /></Svg>
      <Svg w={24} h={24} className="ml-[48px]">
        <path d="M1 0v4h14V0M1 24v-4h14v4M1 7.500h14v9H1zM22 0v6M22 12v12M20 9h3" stroke="#222" strokeWidth="1.600" />
      </Svg>
      <div className="ml-[28.5px] flex">
        <TaskApp>
          <Svg w={34} h={30}>
            <path d="M1 3q0-2 2-2h9l3 3h15v8H1z" fill="#e0a011" />
            <path d="M1 7h13l3-2h15q1 0 1 1v20q0 1-1 1H2q-1 0-1-1z" fill="#ffd264" />
            <path d="M6 28V18q0-2 2-2h18q2 0 2 2v10h-6v-5H12v5z" fill="#3d96de" />
          </Svg>
        </TaskApp>
        <div className="flex h-[60px] w-[67px] flex-col items-center bg-[#eef5f9]">
          <div className="flex h-[57px] items-center pt-[3px]">
            <svg width="36" height="36" viewBox="0 0 36 36">
              <defs>
                <linearGradient id="edgeA" x1="0" x2="1"><stop offset="0" stopColor="#2ca7e8" /><stop offset=".5" stopColor="#2fc4c8" /><stop offset="1" stopColor="#6bdc55" /></linearGradient>
                <linearGradient id="edgeB" x1="0" y1="0" x2="0" y2="1"><stop offset="0" stopColor="#1b8de0" /><stop offset="1" stopColor="#0c4f9f" /></linearGradient>
              </defs>
              <path d="M1 17Q3 1 18 0 34 1 36 15q0 10-12 9-4-1-2-4 2-5-4-8-9-3-17 5Z" fill="url(#edgeA)" />
              <path d="M1 16q5-8 15-6-8 4-6 13 3 8 11 13Q1 38 0 19Z" fill="url(#edgeB)" />
              <path d="M15 11q-7 6-4 14 6 13 21 5l2-2q-6 8-16 8Q7 33 8 22q1-9 7-11Z" fill="#1373c8" />
              <path d="M14 20q2 10 13 9 4 0 7-2-5 9-16 9-8-3-4-16Z" fill="#114f9e" />
            </svg>
          </div>
          <div className="h-[3px] w-full bg-[#0078d7]" />
        </div>
        <TaskApp>
          <Svg w={38} h={36}>
            <circle cx="20" cy="6" r="5.500" fill="#7b83eb" /><circle cx="31" cy="8" r="4" fill="#5059c9" />
            <path d="M25 13h11v13q-3 6-9 3Z" fill="#5059c9" /><path d="M10 13h18v13q-2 8-10 8t-8-9Z" fill="#7b83eb" />
            <rect x="1" y="8" width="17" height="18" rx="1.500" fill="#4b53bc" />
            <path d="M5 13h9M9.500 13v9" stroke="#fff" strokeWidth="2.200" />
            <circle cx="30" cy="28" r="8" fill="#6bb700" stroke="#dff0e0" strokeWidth="1.500" />
            <path d="m26 28 3 3 5-6" stroke="#fff" strokeWidth="2" />
          </Svg>
        </TaskApp>
        <TaskApp>
          <Svg w={32} h={32}><path d="M0 0h32v32H0z" fill="#434343" /><path d="M17 32V18l15-3-8 13-4 4Z" fill="#ffd500" /><path d="m20 32 12-16v16Z" fill="#343434" /></Svg>
        </TaskApp>
        <TaskApp>
          <Svg w={36} h={34}>
            <rect x="8" y="1" width="27" height="32" rx="2" fill="#ca64ea" /><path d="M28 9h7v8h-7z" fill="#ae4bd5" /><path d="M28 17h7v8h-7z" fill="#9332bf" /><path d="M28 25h7v6q0 2-2 2h-5z" fill="#7719aa" />
            <rect x="0" y="8" width="18" height="18" rx="1.500" fill="#7719aa" /><path d="M5.500 22V12l7 10V12" stroke="#fff" strokeWidth="2" />
          </Svg>
        </TaskApp>
        <TaskApp>
          <Svg w={40} h={38}>
            <rect x="9" y="2" width="25" height="30" rx="2" fill="#1490df" /><path d="M9 2h13v10H9z" fill="#0364b8" /><path d="M22 12h12v10H22z" fill="#28a8ea" />
            <rect x="0" y="9" width="18" height="18" rx="1.500" fill="#0f6cbd" /><circle cx="9" cy="18" r="4.300" stroke="#fff" strokeWidth="2.200" />
            <path d="M16 22h23v16H16z" fill="#f0b873" /><path d="m17 23 10.500 10L38 23" stroke="#fff" strokeWidth="1.800" />
          </Svg>
        </TaskApp>
        <TaskApp>
          <Svg w={36} h={36}>
            <path d="M0 0h36v36H0z" fill="#7a2a82" /><path d="M0 0h36L0 36Z" fill="#50246d" />
            <path d="M12 5q0 5 6 5t6-5M12 11q-2 2-2 5v7q0 7 8 7t8-7v-7q0-3-2-5" stroke="#fff" strokeWidth="2.600" />
            <rect x="15.500" y="15" width="5" height="10" rx="2.500" stroke="#fff" strokeWidth="1.600" />
          </Svg>
        </TaskApp>
        <TaskApp><div className="flex h-9 w-9 items-center justify-center bg-[#0568e0] font-['Lato'] text-[23px] font-bold text-white">Ui</div></TaskApp>
        <TaskApp>
          <Svg w={36} h={34}>
            <rect x="8" y="1" width="28" height="32" rx="2" fill="#21a366" /><path d="M22 1h12q2 0 2 2v8H22z" fill="#33c481" /><path d="M8 17h28v8H8z" fill="#107c41" /><path d="M8 25h28v6q0 2-2 2H10q-2 0-2-2z" fill="#185c37" />
            <rect x="0" y="8" width="18" height="18" rx="1.500" fill="#107c41" /><path d="m5.500 12 7 10M12.500 12l-7 10" stroke="#fff" strokeWidth="2.200" />
          </Svg>
        </TaskApp>
        <TaskApp>
          <Svg w={36} h={36}><path d="M0 0h36v36H0z" fill="#2fb457" /><rect x="4.500" y="4.500" width="27" height="27" stroke="#fff" strokeWidth="2.500" /><path d="M12 10v16l13-8Z" fill="#fff" /></Svg>
        </TaskApp>
      </div>
      <Svg w={34} h={34} className="ml-[40px]">
        <path d="M14 1q4 10-3 15-4 3-9 1 3 6 10 5l8-7q0-10-6-14Z" fill="#fdb913" />
        <path d="M7 23q0-5 6-6 3-6 9-3 6 0 7 6 4 3 0 5H11q-4 0-4-2Z" fill="#f6fafc" />
        <path d="M14 19q5 6 3 10-3 3-6-1-1-3 3-9ZM26 19q6 7 4 11-4 4-7-1-1-4 3-10Z" fill="#2aa5ea" />
      </Svg>
      <Fit w={44} className="ml-[13px] pt-[3px] text-[19px]">27°C</Fit>
      <Svg w={18} h={12} className="ml-[26px]"><path d="m1 10 8-8 8 8" stroke="#222" strokeWidth="1.800" /></Svg>
      <Svg w={24} h={18} className="ml-[15px]"><path d="M5 17q-5 0-5-5t5-5q2-6 7-6 6 0 8 6 4 1 4 5t-5 5Z" fill="#0f7bd8" /><path d="M3 17q-3-7 5-8 6-3 12 7-1 1-3 1Z" fill="#2a9cf0" /></Svg>
      <Svg w={24} h={18} className="ml-[12px]"><path d="M8 4.500h13v12H6v-6M21 8h2.500v5H21" stroke="#222" strokeWidth="1.500" /><path d="M9 7h6v7H9z" fill="#222" /><path d="M1 2h7v4q0 3-3.500 3T1 6zM2.500 0v2M6 0v2M4.500 9v8" stroke="#222" strokeWidth="1.400" /></Svg>
      <Svg w={24} h={18} className="ml-[12px]"><path d="M7 1.500h16v11H5V8M14 12.500V17M9 17h10M1 1h5v5H1zM3.500 6v6" stroke="#222" strokeWidth="1.500" /></Svg>
      <Svg w={24} h={20} className="ml-[12px]"><path d="M1 7h4l5-5v16l-5-5H1zM13 7q2 3 0 6M16.500 4.500q4 5 0 11M20 2q5 8 0 16" stroke="#222" strokeWidth="1.400" /></Svg>
      <div className="ml-[21px] flex flex-col items-center text-[17px] leading-[28px]">
        <Fit w={65}>9:45 PM</Fit>
        <Fit w={74}>7/7/2022</Fit>
      </div>
      <div className="relative ml-[33px] h-10 w-10">
        <Svg w={26} h={24} className="mt-[7px]"><path d="M0 0h24v18H8l-5 6v-6H0z" fill="#000" /><path d="M4 5h16M4 9h16M4 13h12" stroke="#d8dbe9" strokeWidth="1.500" /></Svg>
        <div className="absolute left-[8px] top-[18px] flex h-[26px] w-[30px] items-center justify-center rounded-full border border-[#555] bg-[#dcdde4] text-[16px] font-semibold">32</div>
      </div>
      <div className="ml-auto mr-[6px] h-full w-px bg-[#a9adb8]" />
    </div>
  );
}

export default function App() {
  return (
    <div className="flex h-[1080px] w-[1920px] flex-col overflow-hidden bg-[#1e2330] font-['Open_Sans'] leading-normal">
      <TabStrip />
      <div className="h-[107px] border-b-2 border-[#bdbfbd] bg-[#f7f7f7]">
        <AddressBar />
        <Bookmarks />
      </div>
      <SessionBar />
      <ToolBar />
      <div className="flex h-[739px] shrink-0">
        <div className="w-[226px]" />
        <Pos />
        <div className="w-[226px]" />
        <Chat />
      </div>
      <TaskBar />
    </div>
  );
}
